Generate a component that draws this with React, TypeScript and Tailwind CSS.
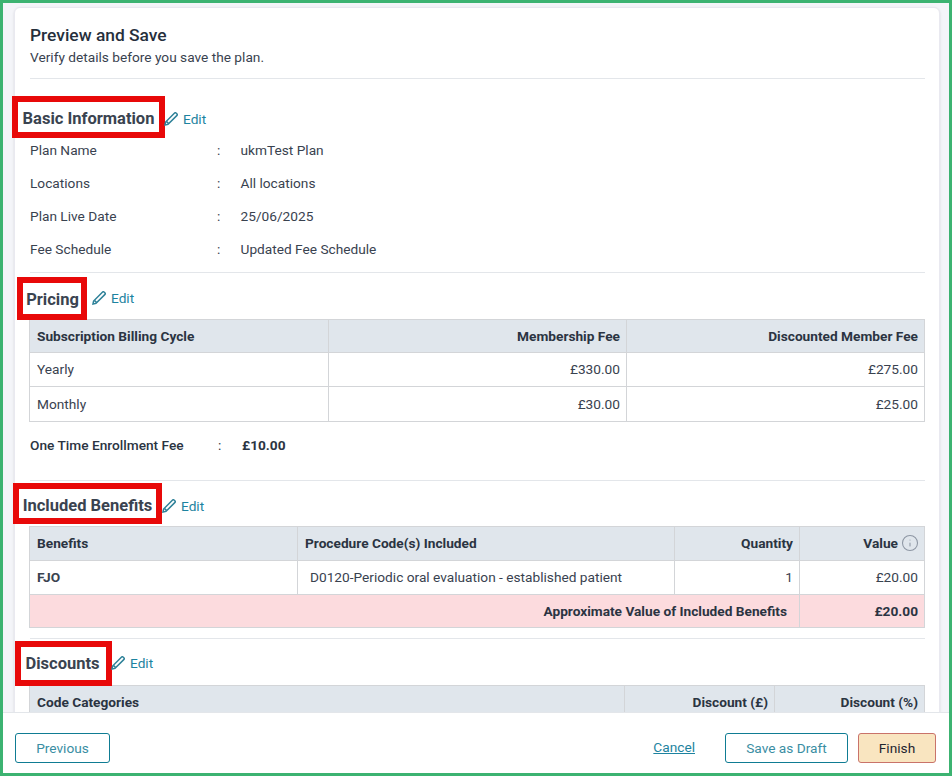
import React from 'react';
import { Info } from 'lucide-react';

const cellBorder = 'border border-[#d3d5d8]';
const th = `${cellBorder} bg-[#e0e6ec] pl-[7px] pr-[6px] text-[13.7px] font-bold text-[#2b3442]`;
const td = `${cellBorder} pl-[7px] pr-[6px] text-[13.7px] text-[#39424f]`;

const EditLink = ({ className }: { className: string }) => (
  <a className={`flex items-center gap-[5px] text-[13.7px] text-[#1d83a0] ${className}`}>
    <svg viewBox="0 0 14 14" className="w-[14px] h-[14px]" fill="none" stroke="#2f8299" strokeWidth="1.5">
      <path d="M1 13 L1.6 10 L10.6 1 C11 .6 11.6 .6 12 1 L13 2 C13.4 2.4 13.4 3 13 3.4 L4 12.4 Z" />
      <path d="M2.6 9.6 L4.4 11.4" />
    </svg>
    <span>Edit</span>
  </a>
);

// heading sits inside the red annotation frame
const SectionHead = ({
  title,
  className,
  frame,
  titleOffset = '',
  editOffset = '',
}: {
  title: string;
  className: string;
  frame: string;
  titleOffset?: string;
  editOffset?: string;
}) => (
  <div className={`flex items-center ${className}`}>
    <div className={`flex items-center justify-center border-[6px] border-[#e80909] bg-white ${frame}`}>
      <h2 className={`text-[16.5px] font-bold text-[#3a4350] whitespace-nowrap ${titleOffset}`}>{title}</h2>
    </div>
    <EditLink className={editOffset} />
  </div>
);

const InfoRow = ({ label, value }: { label: string; value: string }) => (
  <div className="flex items-center h-[33px] text-[13.7px] text-[#39424f]">
    <span className="w-[187px]">{label}</span>
    <span className="w-[23.5px]">:</span>
    <span>{value}</span>
  </div>
);

const App = () => {
  return (
    <div className="w-[952px] h-[776px] flex flex-col border-[3px] border-[#3cb371] bg-[#f4f5f9] overflow-hidden font-['Roboto',sans-serif]">
      <main className="flex-1 min-h-0 overflow-hidden pl-[11px] pr-[9px] pt-[4px]">
        <div className="bg-white border border-[#e9e9f0] rounded-t-md pl-[15px] pr-[14px] shadow-sm">
          {/* Header */}
          <div className="h-[71px] pt-[15px] border-b border-[#e3e6ea]">
            <h1 className="text-[17.4px] leading-[25px] font-medium text-[#262f3c]">Preview and Save</h1>
            <p className="text-[13.7px] leading-[18px] text-[#39424f]">Verify details before you save the plan.</p>
          </div>

          {/* Basic Information */}
          <SectionHead
            title="Basic Information"
            className="mt-[17px] -ml-[18px]"
            frame="w-[153px] h-[42px] -mr-px"
            titleOffset="pt-[4px]"
            editOffset="pt-[4px]"
          />
          <div className="mt-[-4px] pb-[6px] border-b border-[#e3e6ea]">
            <InfoRow label="Plan Name" value="ukmTest Plan" />
            <InfoRow label="Locations" value="All locations" />
            <InfoRow label="Plan Live Date" value="25/06/2025" />
            <InfoRow label="Fee Schedule" value="Updated Fee Schedule" />
          </div>

          {/* Pricing */}
          <SectionHead
            title="Pricing"
            className="mt-[4px] -ml-[13px]"
            frame="w-[70px] h-[43px] mr-[5px]"
            titleOffset="pt-[4px] pl-[1px]"
          />
          <table className="w-[calc(100%+1px)] -ml-px table-fixed border-collapse -mt-px">
            <colgroup>
              <col className="w-[299px]" />
              <col className="w-[298px]" />
              <col />
            </colgroup>
            <thead>
              <tr className="h-[33px]">
                <th className={`${th} text-left`}>Subscription Billing Cycle</th>
                <th className={`${th} text-right`}>Membership Fee</th>
                <th className={`${th} text-right`}>Discounted Member Fee</th>
              </tr>
            </thead>
            <tbody>
              <tr className="h-[34px]">
                <td className={td}>Yearly</td>
                <td className={`${td} text-right`}>£330.00</td>
                <td className={`${td} text-right`}>£275.00</td>
              </tr>
              <tr className="h-[35px]">
                <td className={td}>Monthly</td>
                <td className={`${td} text-right`}>£30.00</td>
                <td className={`${td} text-right`}>£25.00</td>
              </tr>
            </tbody>
          </table>
          <div className="flex items-center h-[59px] pb-[12px] border-b border-[#e3e6ea] text-[13.7px] font-medium text-[#2b3442]">
            <span className="w-[188px]">One Time Enrollment Fee</span>
            <span className="w-[24px] font-normal">:</span>
            <span className="font-bold">£10.00</span>
          </div>

          {/* Included Benefits */}
          <SectionHead
            title="Included Benefits"
            className="mt-[2px] -ml-[17px]"
            frame="w-[149px] h-[41px]"
            titleOffset="pt-[6px]"
            editOffset="pt-[6px]"
          />
          <table className="w-[calc(100%+1px)] -ml-px table-fixed border-collapse mt-[2px]">
            <colgroup>
              <col className="w-[268px]" />
              <col className="w-[377px]" />
              <col className="w-[125px]" />
              <col />
            </colgroup>
            <thead>
              <tr className="h-[34px]">
                <th className={`${th} text-left`}>Benefits</th>
                <th className={`${th} text-left`}>Procedure Code(s) Included</th>
                <th className={`${th} text-right`}>Quantity</th>
                <th className={`${th} text-right`}>
                  <span className="inline-flex items-center gap-[3px]">
                    Value <Info className="w-[18px] h-[18px] -mr-px text-[#8d96a3]" strokeWidth={1.4} />
                  </span>
                </th>
              </tr>
            </thead>
            <tbody>
              <tr className="h-[34px]">
                <td className={`${td} font-bold text-[#2b3442]`}>FJO</td>
                <td className={td}>
                  <span className="pl-[5px]">D0120-Periodic oral evaluation - established patient</span>
                </td>
                <td className={`${td} text-right`}>1</td>
                <td className={`${td} text-right`}>£20.00</td>
              </tr>
              <tr className="h-[33px] bg-[#fcdbde]">
                <td colSpan={3} className={`${th} !bg-[#fcdbde] !pr-[12px] text-right`}>
                  Approximate Value of Included Benefits
                </td>
                <td className={`${th} !bg-[#fcdbde] text-right`}>£20.00</td>
              </tr>
            </tbody>
          </table>
          <div className="mt-[10px] border-t border-[#e3e6ea]" />

          {/* Discounts */}
          <SectionHead
            title="Discounts"
            className="mt-[2px] -ml-[15px]"
            frame="w-[97px] h-[45px] -mr-px"
            titleOffset="pt-[2px] pr-[2px]"
          />
          <table className="w-[calc(100%+1px)] -ml-px table-fixed border-collapse -mt-px">
            <colgroup>
              <col className="w-[595px]" />
              <col className="w-[150px]" />
              <col />
            </colgroup>
            <thead>
              <tr className="h-[34px]">
                <th className={`${th} text-left`}>Code Categories</th>
                <th className={`${th} text-right`}>Discount (£)</th>
                <th className={`${th} text-right`}>Discount (%)</th>
              </tr>
            </thead>
          </table>
        </div>
      </main>

      {/* Footer */}
      <footer className="flex items-center h-[61px] shrink-0 bg-white border-t border-[#e3e6ea] pl-[12px] pr-[13px] pt-[10px] text-[13.7px]">
        <button className="w-[95px] h-[30px] rounded-[3px] border border-[#0f7c93] text-[#3a8ea3]">Previous</button>
        <a className="ml-auto underline text-[#1d83a0] -mt-[2px]">Cancel</a>
        <button className="ml-[30px] w-[123px] h-[30px] rounded-[3px] border border-[#0f7c93] text-[#3a8ea3]">Save as Draft</button>
        <button className="ml-[10px] w-[78px] h-[30px] rounded-[3px] border border-[#c9736a] bg-[#f9e5c0] text-[#1f2530]">Finish</button>
      </footer>
    </div>
  );
};

export default App;
